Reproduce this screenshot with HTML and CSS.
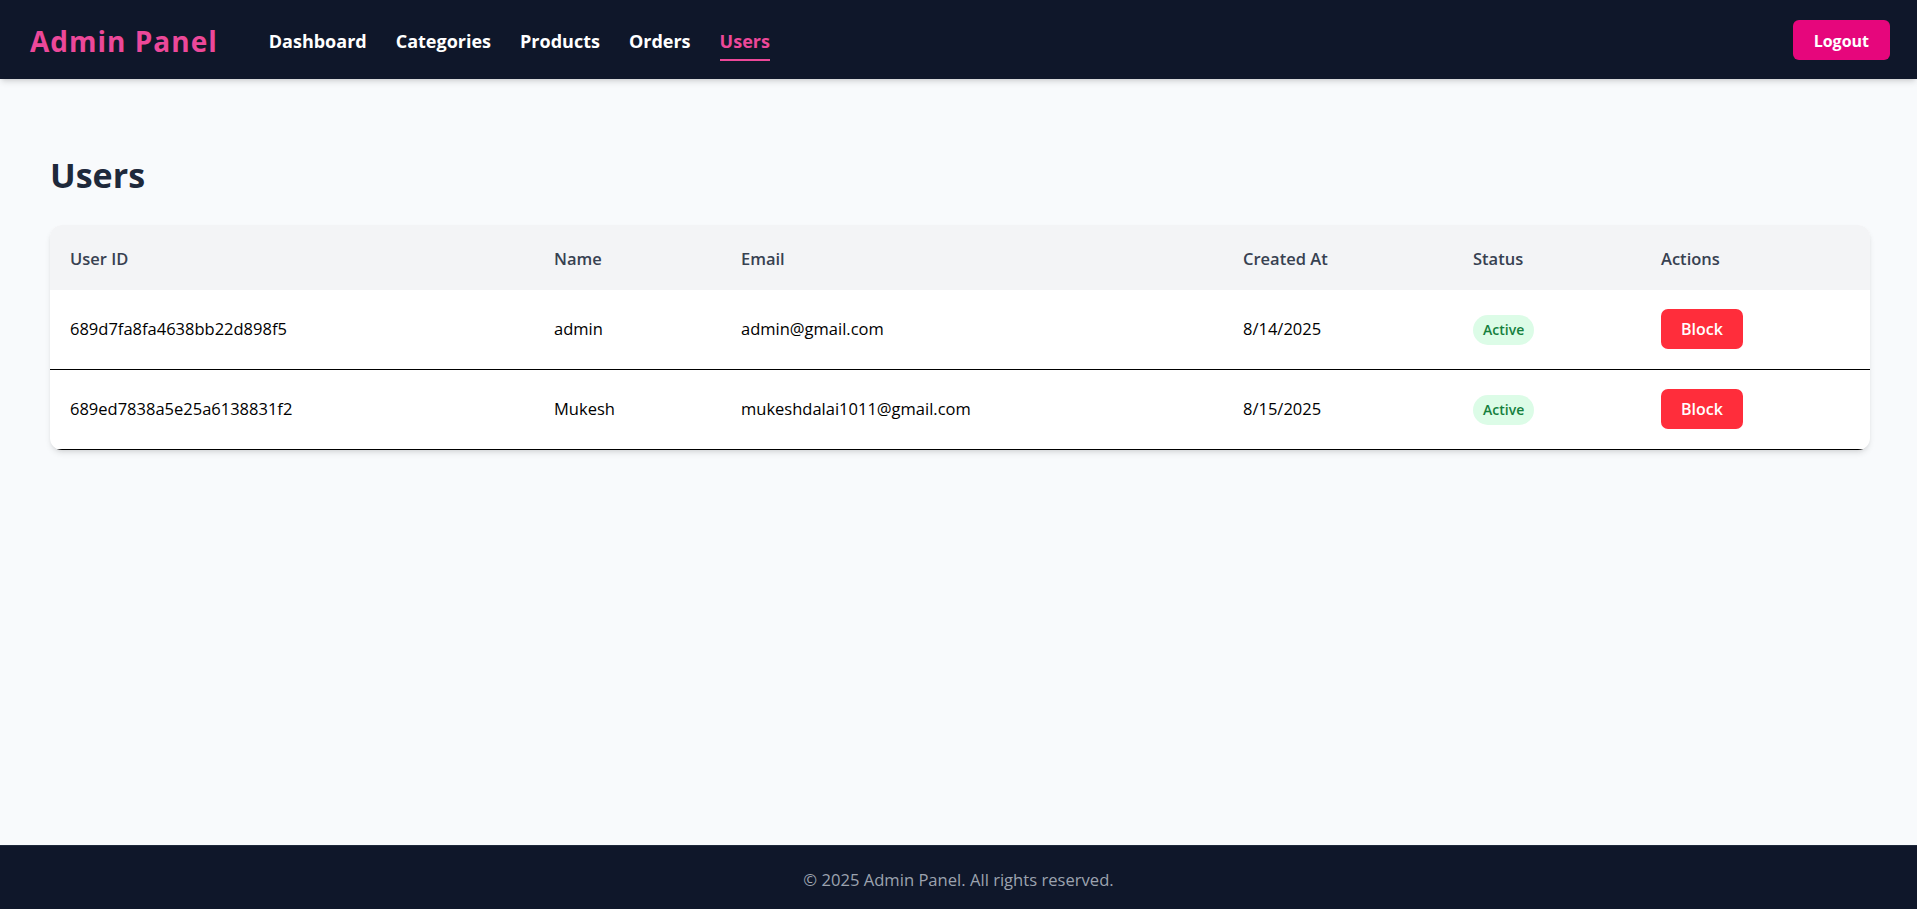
FILE: index.html
```html
<!DOCTYPE html>
<html lang="en">
<head>
<meta charset="utf-8">
<title>Admin Panel - Users</title>
<link rel="stylesheet" href="styles.css">
</head>
<body>
<header class="topbar">
  <div class="brand-group">
    <div class="logo">Admin Panel</div>
    <nav class="nav">
      <a class="nav-link" href="#">Dashboard</a>
      <a class="nav-link" href="#">Categories</a>
      <a class="nav-link" href="#">Products</a>
      <a class="nav-link" href="#">Orders</a>
      <a class="nav-link active" href="#">Users</a>
    </nav>
  </div>
  <button class="logout">Logout</button>
</header>

<main class="main">
  <h1 class="page-title">Users</h1>
  <div class="card">
    <table class="users">
      <colgroup>
        <col class="c-id">
        <col class="c-name">
        <col class="c-email">
        <col class="c-date">
        <col class="c-status">
        <col class="c-actions">
      </colgroup>
      <thead>
        <tr>
          <th>User ID</th>
          <th>Name</th>
          <th>Email</th>
          <th>Created At</th>
          <th>Status</th>
          <th>Actions</th>
        </tr>
      </thead>
      <tbody>
        <tr>
          <td>689d7fa8fa4638bb22d898f5</td>
          <td>admin</td>
          <td>admin@gmail.com</td>
          <td>8/14/2025</td>
          <td><span class="badge">Active</span></td>
          <td><button class="block-btn">Block</button></td>
        </tr>
        <tr>
          <td>689ed7838a5e25a6138831f2</td>
          <td>Mukesh</td>
          <td>mukeshdalai1011@gmail.com</td>
          <td>8/15/2025</td>
          <td><span class="badge">Active</span></td>
          <td><button class="block-btn">Block</button></td>
        </tr>
      </tbody>
    </table>
  </div>
</main>

<footer class="footer">© 2025 Admin Panel. All rights reserved.</footer>
</body>
</html>
```

FILE: styles.css
```css
* { box-sizing: border-box; }

html, body { margin: 0; padding: 0; }

body {
  font-family: "Open Sans", "Noto Sans", "Liberation Sans", sans-serif;
  background: #f8fafc;
  color: #000;
  min-height: 100vh;
  display: flex;
  flex-direction: column;
}

.topbar {
  height: 79px;
  background: #0f172a;
  display: flex;
  align-items: center;
  justify-content: space-between;
  padding: 0 27px 0 30px;
  box-shadow: 0 4px 6px -1px rgba(0,0,0,0.12), 0 2px 4px -2px rgba(0,0,0,0.1);
  position: relative;
  z-index: 2;
}

.brand-group {
  display: flex;
  align-items: center;
}

.logo {
  color: #ec4899;
  font-size: 28px;
  font-weight: 700;
  letter-spacing: 1px;
  line-height: 36px;
  padding-top: 3px;
  margin-right: 51px;
}

.nav {
  display: flex;
  align-items: center;
  gap: 29px;
}

.nav-link {
  color: #ffffff;
  text-decoration: none;
  font-size: 18px;
  font-weight: 700;
  line-height: 28px;
  padding: 9px 0 4px;
  border-bottom: 2px solid transparent;
}

.nav-link.active {
  color: #ec4899;
  border-bottom-color: #ec4899;
}

.logout {
  font-family: inherit;
  background: #e6067c;
  color: #fff;
  border: none;
  border-radius: 6px;
  font-size: 16px;
  font-weight: 700;
  line-height: 24px;
  padding: 9px 21px 7px;
  cursor: pointer;
}

.main {
  flex: 1;
  padding: 76px 47px 40px 50px;
}

.page-title {
  margin: 0 0 30px;
  font-size: 34px;
  line-height: 40px;
  font-weight: 700;
  color: #1e293b;
}

.card {
  background: #fff;
  border-radius: 12px;
  overflow: hidden;
  box-shadow: 0 4px 6px -1px rgba(0,0,0,0.1), 0 2px 4px -2px rgba(0,0,0,0.1);
}

.users {
  width: 100%;
  border-collapse: collapse;
  table-layout: fixed;
}

.c-id { width: 484px; }
.c-name { width: 187px; }
.c-email { width: 502px; }
.c-date { width: 230px; }
.c-status { width: 188px; }
.c-actions { width: 229px; }

.users th {
  background: #f3f4f6;
  text-align: left;
  font-size: 16.5px;
  font-weight: 600;
  color: #374151;
  line-height: 25px;
  padding: 21px 20px 19px;
}

.users td {
  font-size: 16.5px;
  line-height: 24px;
  padding: 19px 20px 20px;
  vertical-align: middle;
  color: #000;
}

.users td.cell-text { padding-top: 20px; }

.users tbody tr {
  border-bottom: 1px solid #000;
}

.badge {
  display: inline-block;
  background: #dcfce7;
  color: #15803d;
  font-size: 14px;
  font-weight: 600;
  line-height: 22px;
  padding: 4px 10px;
  border-radius: 999px;
  vertical-align: -3px;
}

.block-btn {
  font-family: inherit;
  background: #ff2d3b;
  color: #fff;
  border: none;
  border-radius: 7px;
  font-size: 16px;
  font-weight: 600;
  line-height: 24px;
  padding: 8px 20px;
  cursor: pointer;
  vertical-align: middle;
}

.footer {
  height: 64px;
  background: #0f172a;
  border-top: 1px solid #1e293b;
  color: #9ca3af;
  font-size: 16.6px;
  display: flex;
  align-items: center;
  justify-content: center;
  padding-top: 4px;
}
```
